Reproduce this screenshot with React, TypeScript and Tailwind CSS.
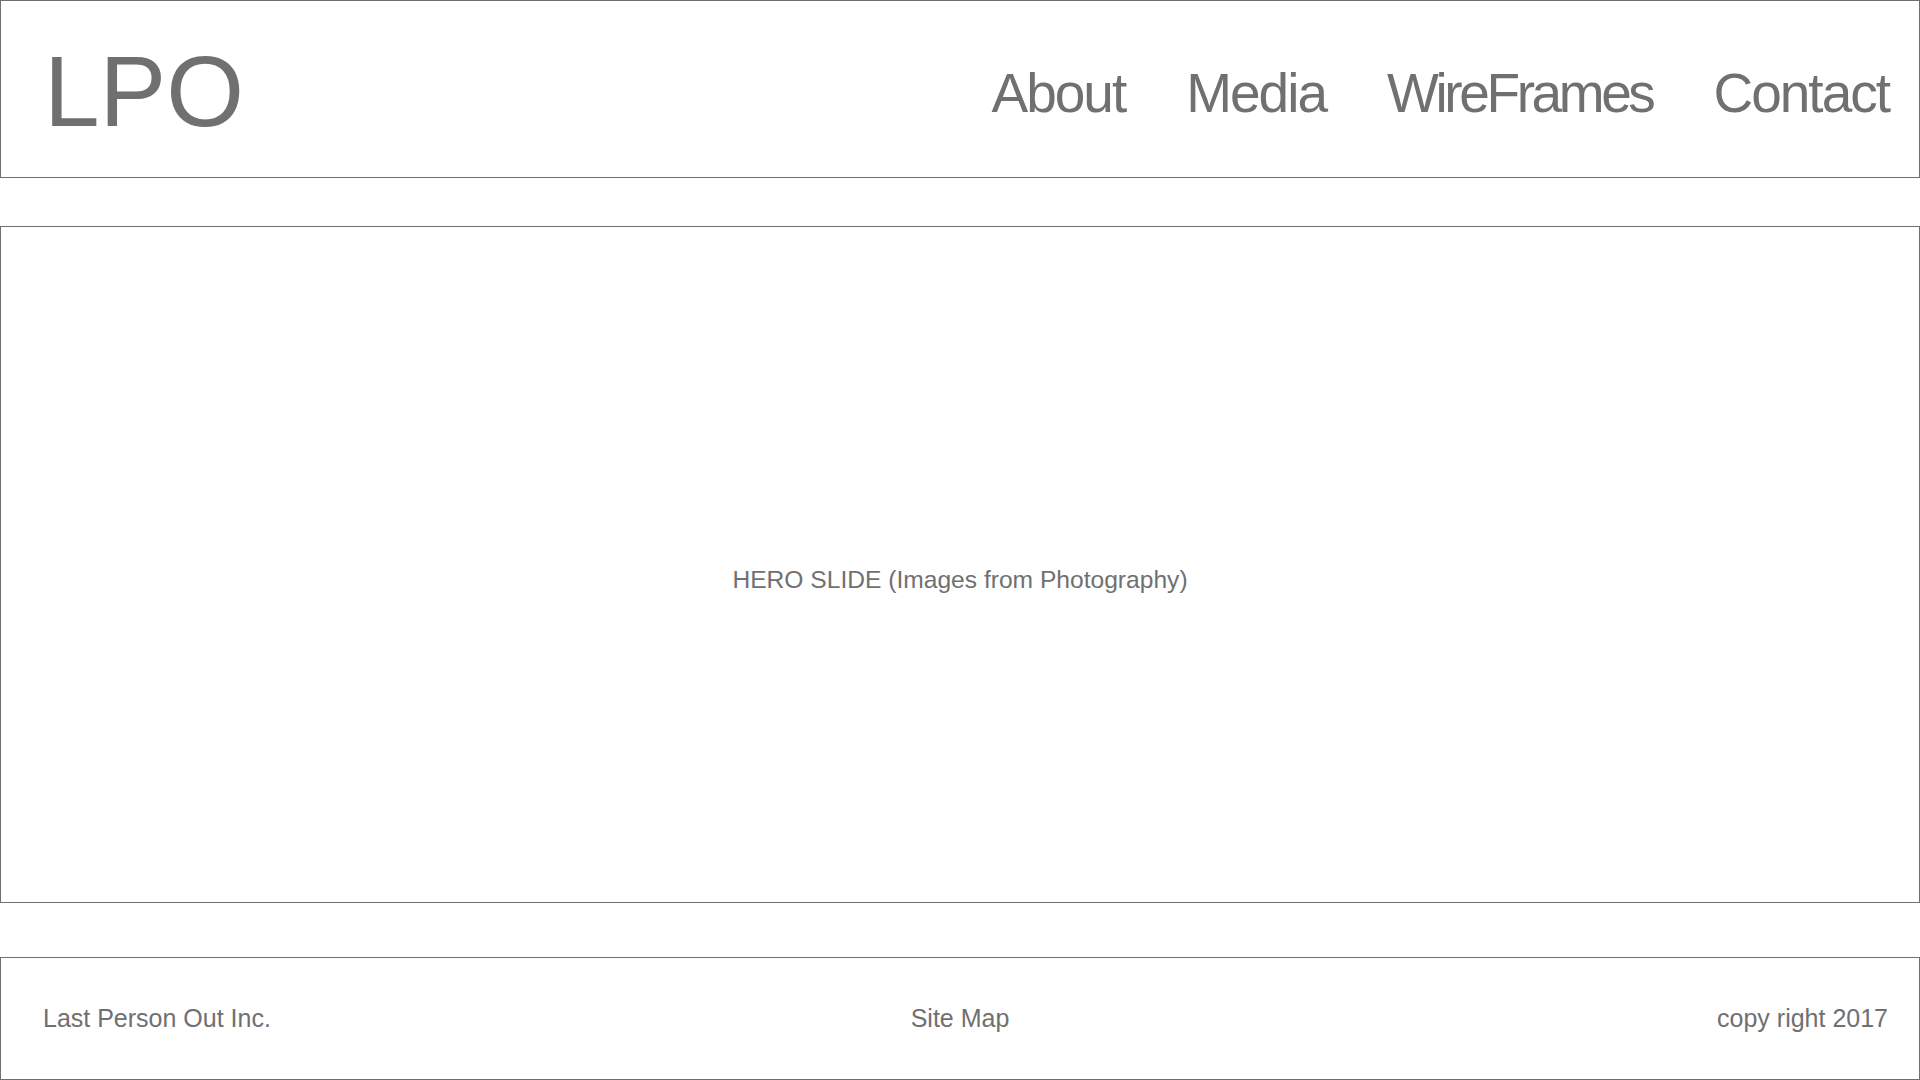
const navLinks = [
  { label: "About", className: "tracking-[-2px]" },
  { label: "Media", className: "tracking-[-2px]" },
  { label: "WireFrames", className: "tracking-[-3.4px]" },
  { label: "Contact", className: "tracking-[-2px]" },
];

export default function App() {
  return (
    <div className="min-h-screen w-full bg-white text-[#707070] font-['Liberation_Sans',Arial,sans-serif]">
      <header className="flex h-[178px] items-center justify-between border border-[#707070] pl-[43px] pr-[30px] pt-[4px]">
        <a href="#" className="text-[100px] leading-none">
          LPO
        </a>
        <nav className="flex items-center gap-[61px] pt-[4px]">
          {navLinks.map((link) => (
            <a key={link.label} href="#" className={`text-[55px] leading-none ${link.className}`}>
              {link.label}
            </a>
          ))}
        </nav>
      </header>

      <main className="mt-[48px] flex h-[677px] items-center justify-center border border-[#707070] pt-[32px]">
        <p className="text-[24.6px] leading-none">HERO SLIDE (Images from Photography)</p>
      </main>

      <footer className="mt-[54px] grid h-[123px] grid-cols-3 items-center border border-[#707070] px-[31px] text-[25px] leading-none">
        <span className="pl-[11px]">Last Person Out Inc.</span>
        <span className="text-center">Site Map</span>
        <span className="text-right">copy right 2017</span>
      </footer>
    </div>
  );
}
